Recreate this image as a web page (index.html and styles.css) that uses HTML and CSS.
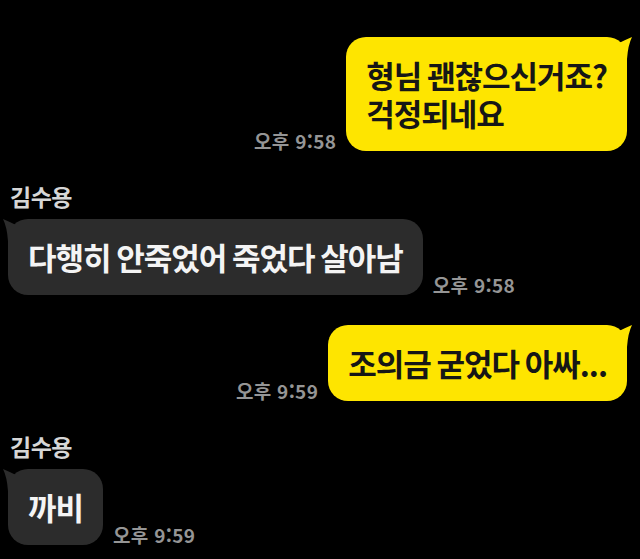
FILE: index.html
```html
<!DOCTYPE html>
<html lang="ko">
<head>
  <meta charset="UTF-8">
  <meta name="viewport" content="width=device-width, initial-scale=1.0">
  <title>채팅</title>
  <link rel="stylesheet" href="styles.css">
</head>
<body>
  <div class="chat">
    <div class="row mine">
      <span class="time">오후 9:58</span>
      <div class="bubble yellow">
        형님 괜찮으신거죠?<br>걱정되네요
        <svg class="tail" width="20" height="24" viewBox="0 0 20 24"><path d="M6 6 Q12 3 19 0 Q15 8 14 22 L6 22 Z"/></svg>
      </div>
    </div>

    <div class="name">김수용</div>
    <div class="row theirs">
      <div class="bubble dark">
        다행히 안죽었어 죽었다 살아남
        <svg class="tail" width="20" height="24" viewBox="0 0 20 24"><path d="M14 6 Q8 3 1 0 Q5 8 6 22 L14 22 Z"/></svg>
      </div>
      <span class="time">오후 9:58</span>
    </div>

    <div class="row mine gap-top">
      <span class="time">오후 9:59</span>
      <div class="bubble yellow">
        조의금 굳었다 아싸...
        <svg class="tail" width="20" height="24" viewBox="0 0 20 24"><path d="M6 6 Q12 3 19 0 Q15 8 14 22 L6 22 Z"/></svg>
      </div>
    </div>

    <div class="name">김수용</div>
    <div class="row theirs">
      <div class="bubble dark">
        까비
        <svg class="tail" width="20" height="24" viewBox="0 0 20 24"><path d="M14 6 Q8 3 1 0 Q5 8 6 22 L14 22 Z"/></svg>
      </div>
      <span class="time">오후 9:59</span>
    </div>
  </div>
</body>
</html>
```

FILE: styles.css
```css
body {
  margin: 0;
  padding: 0;
  background-color: #000;
  font-family: "Noto Sans CJK KR", "Noto Sans", sans-serif;
  height: 559px;
  overflow: hidden;
}

.chat {
  display: flex;
  flex-direction: column;
  padding: 37px 13px 0 8px;
}

.row {
  display: flex;
  align-items: flex-end;
  gap: 10px;
}

.row.mine {
  justify-content: flex-end;
}

.row.gap-top {
  margin-top: 30px;
}

.name {
  margin: 32px 0 10px 2px;
  font-size: 23px;
  line-height: 26px;
  font-weight: 700;
  letter-spacing: -0.5px;
  color: #d6d6d6;
}

.bubble {
  position: relative;
  padding: 19px 20px;
  border-radius: 20px;
  font-size: 31px;
  line-height: 38px;
  font-weight: 700;
  letter-spacing: -1px;
  word-spacing: -2px;
  white-space: nowrap;
}

.bubble.yellow {
  background-color: #fee500;
  color: #161616;
}

.bubble.dark {
  background-color: #2c2c2c;
  color: #f4f4f4;
}

.tail {
  position: absolute;
  top: 0;
}

.yellow .tail {
  right: -6px;
  fill: #fee500;
}

.dark .tail {
  left: -6px;
  fill: #2c2c2c;
}

.time {
  font-size: 19px;
  line-height: 20px;
  font-weight: 700;
  letter-spacing: 0.3px;
  color: #959595;
  white-space: nowrap;
}
```
